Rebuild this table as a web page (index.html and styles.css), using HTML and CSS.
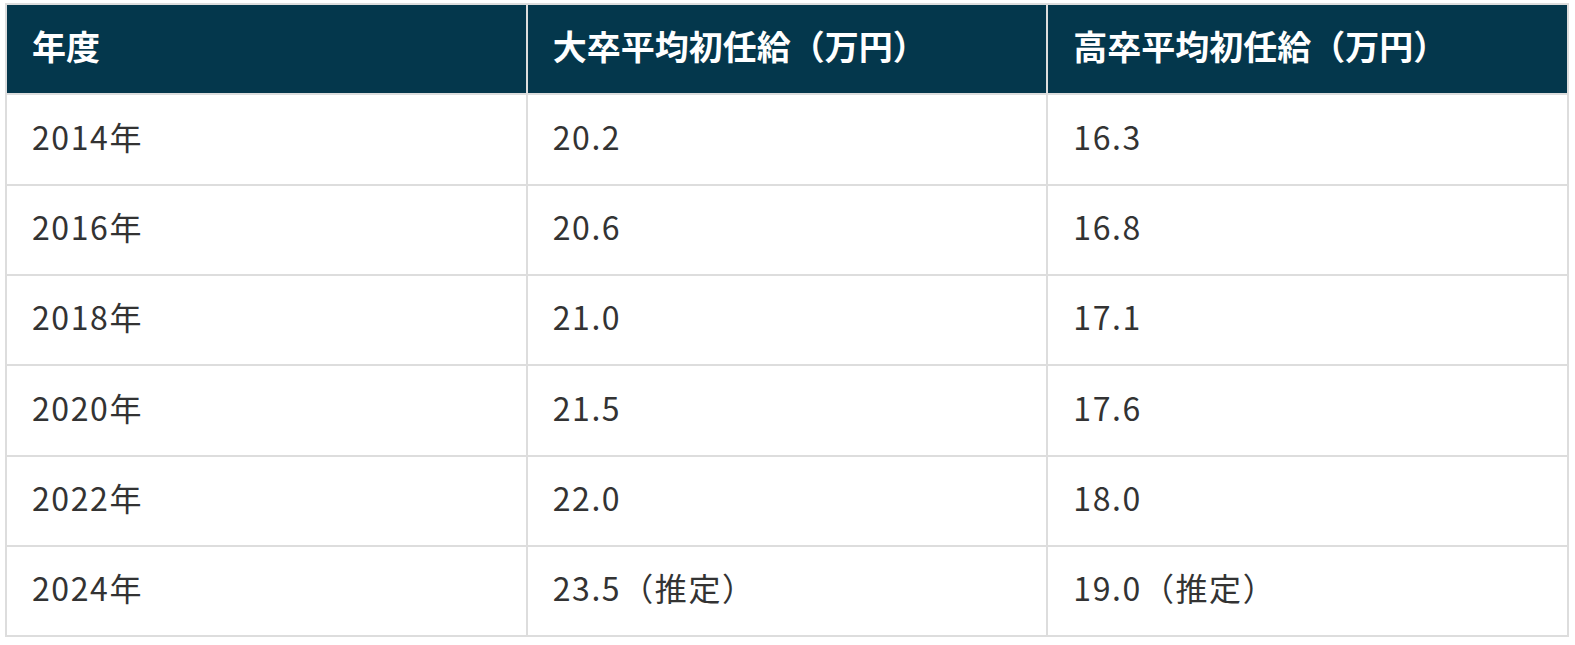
FILE: index.html
```html
<!DOCTYPE html>
<html lang="ja">
<head>
<meta charset="utf-8">
<title>初任給の推移</title>
<link rel="stylesheet" href="styles.css">
</head>
<body>
<table class="salary-table">
  <thead>
    <tr>
      <th>年度</th>
      <th>大卒平均初任給（万円）</th>
      <th>高卒平均初任給（万円）</th>
    </tr>
  </thead>
  <tbody>
    <tr><td>2014年</td><td>20.2</td><td>16.3</td></tr>
    <tr><td>2016年</td><td>20.6</td><td>16.8</td></tr>
    <tr><td>2018年</td><td>21.0</td><td>17.1</td></tr>
    <tr><td>2020年</td><td>21.5</td><td>17.6</td></tr>
    <tr><td>2022年</td><td>22.0</td><td>18.0</td></tr>
    <tr><td>2024年</td><td>23.5（推定）</td><td>19.0（推定）</td></tr>
  </tbody>
</table>
</body>
</html>
```

FILE: styles.css
```css
html, body {
  margin: 0;
  padding: 0;
  background: #ffffff;
}

body {
  padding: 3px 6px 0 5px;
  font-family: "Noto Sans CJK JP", "Noto Sans", sans-serif;
  color: #333333;
}

.salary-table {
  width: 100%;
  border-collapse: collapse;
  table-layout: fixed;
  font-size: 32px;
}

.salary-table th,
.salary-table td {
  border: 2px solid #dddddd;
  padding: 16.5px 25px 23.83px;
  text-align: left;
  line-height: 48px;
}

.salary-table th {
  background: #04374c;
  color: #ffffff;
  font-size: 34px;
  font-weight: 700;
}

.salary-table td {
  font-weight: 400;
  letter-spacing: 1.6px;
}
```
